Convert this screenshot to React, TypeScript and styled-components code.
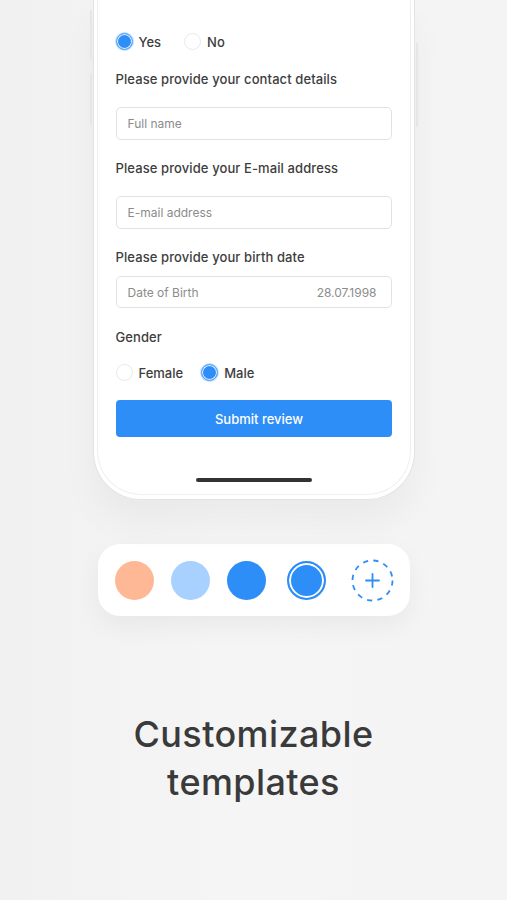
import styled, { createGlobalStyle } from "styled-components";

const GlobalStyle = createGlobalStyle`
  * {
    box-sizing: border-box;
  }
  body {
    margin: 0;
    background: #f4f4f4;
    font-family: Inter, "Noto Sans", sans-serif;
    -webkit-font-smoothing: antialiased;
  }
`;

const BLUE = "#2d8ef7";

const Page = styled.div`
  width: 507px;
  height: 900px;
  overflow: hidden;
  display: flex;
  flex-direction: column;
  align-items: center;
  background: linear-gradient(90deg, #f1f1f1 0%, #f5f5f5 45%, #f4f4f4 100%);
`;

const PhoneWrap = styled.div`
  position: relative;
  width: 322px;
`;

// hardware buttons on the phone edges
const SideButton = styled.span<{ $side: "left" | "right"; $top: number; $height: number }>`
  position: absolute;
  ${(p) => (p.$side === "left" ? "left: -3px;" : "right: -3px;")}
  top: ${(p) => p.$top}px;
  height: ${(p) => p.$height}px;
  width: 2px;
  border-radius: 1px;
  background: #e6e6e6;
`;

const Phone = styled.div`
  width: 322px;
  background: #fff;
  border: 1px solid #e3e3e3;
  border-top: 0;
  border-radius: 0 0 48px 48px;
  padding: 0 3px 4px;
  box-shadow: 0 24px 36px rgba(0, 0, 0, 0.045);
`;

const Screen = styled.div`
  display: flex;
  flex-direction: column;
  background: #fff;
  border: 1px solid #efefef;
  border-top: 0;
  border-radius: 0 0 44px 44px;
  padding: 33px 18px 12px;
`;

const RadioRow = styled.div<{ $gap: number }>`
  display: flex;
  align-items: center;
  gap: ${(p) => p.$gap}px;
  height: 17px;
`;

const Option = styled.label`
  display: flex;
  align-items: center;
  gap: 6px;
  font-size: 13px;
  font-weight: 500;
  color: #3d3d3d;
`;

const Radio = styled.span<{ $checked?: boolean }>`
  width: 17px;
  height: 17px;
  border-radius: 50%;
  flex-shrink: 0;
  ${(p) =>
    p.$checked
      ? `background: ${BLUE};
         border: 1.5px solid #5aa6fa;
         box-shadow: inset 0 0 0 1px #e8f2ff, 0 0 0 1px rgba(45, 142, 247, 0.25);`
      : `background: #fff;
         border: 1px solid #e9e9e9;`}
`;

const Label = styled.div<{ $top: number; $bottom: number }>`
  margin: ${(p) => p.$top}px 0 ${(p) => p.$bottom}px;
  line-height: 18px;
  font-size: 13px;
  font-weight: 500;
  letter-spacing: 0.1px;
  color: #3d3d3d;
`;

const Field = styled.div<{ $height: number }>`
  height: ${(p) => p.$height}px;
  display: flex;
  align-items: center;
  justify-content: space-between;
  padding: 0 14px 0 11px;
  border: 1px solid #e2e2e2;
  border-radius: 5px;
  font-size: 12px;
  color: #8c8c8c;
`;

const Submit = styled.button`
  margin-top: 19px;
  height: 37px;
  border: 0;
  border-radius: 4px;
  background: ${BLUE};
  color: #fff;
  font-family: inherit;
  font-size: 13px;
  font-weight: 500;
  padding-left: 17px;
`;

const HomeBar = styled.div`
  align-self: center;
  margin-top: 41px;
  width: 116px;
  height: 4px;
  border-radius: 2px;
  background: #333;
`;

const Palette = styled.div`
  margin-top: 44px;
  width: 312px;
  height: 72px;
  background: #fff;
  border-radius: 22px;
  box-shadow: 0 10px 26px rgba(0, 0, 0, 0.05);
  display: grid;
  grid-template-columns: 56px 56px 56px 64px 68px;
  align-items: center;
  justify-items: center;
  padding-left: 9px;
`;

const Swatch = styled.span<{ $color: string; $selected?: boolean }>`
  width: 39px;
  height: 39px;
  border-radius: 50%;
  background: ${(p) => p.$color};
  ${(p) =>
    p.$selected &&
    `border: 2px solid ${p.$color};
     box-shadow: inset 0 0 0 2px #fff;`}
`;

const Title = styled.h1`
  margin: 94px 0 0;
  text-align: center;
  font-size: 36px;
  line-height: 48px;
  font-weight: 500;
  letter-spacing: 0.4px;
  color: #3a3a3a;
`;

function AddSwatch() {
  return (
    <svg width="43" height="43" viewBox="0 0 43 43" fill="none">
      <circle
        cx="21.5"
        cy="21.5"
        r="20"
        stroke={BLUE}
        strokeWidth="1.8"
        strokeDasharray="5.2 5.3"
      />
      <path d="M21.5 15v13M15 21.5h13" stroke={BLUE} strokeWidth="1.8" strokeLinecap="round" />
    </svg>
  );
}

export default function App() {
  return (
    <>
      <GlobalStyle />
      <Page>
        <PhoneWrap>
          <SideButton $side="left" $top={10} $height={50} />
          <SideButton $side="left" $top={73} $height={52} />
          <SideButton $side="right" $top={43} $height={84} />
          <Phone>
            <Screen>
              <RadioRow $gap={23}>
                <Option>
                  <Radio $checked />
                  Yes
                </Option>
                <Option>
                  <Radio />
                  No
                </Option>
              </RadioRow>

              <Label $top={20} $bottom={19}>Please provide your contact details</Label>
              <Field $height={33}>Full name</Field>

              <Label $top={19} $bottom={19}>Please provide your E-mail address</Label>
              <Field $height={33}>E-mail address</Field>

              <Label $top={19} $bottom={10}>Please provide your birth date</Label>
              <Field $height={32}>
                <span>Date of Birth</span>
                <span>28.07.1998</span>
              </Field>

              <Label $top={20} $bottom={18}>Gender</Label>
              <RadioRow $gap={18}>
                <Option>
                  <Radio />
                  Female
                </Option>
                <Option>
                  <Radio $checked />
                  Male
                </Option>
              </RadioRow>

              <Submit>Submit review</Submit>
              <HomeBar />
            </Screen>
          </Phone>
        </PhoneWrap>

        <Palette>
          <Swatch $color="#ffb896" />
          <Swatch $color="#a9d1ff" />
          <Swatch $color={BLUE} />
          <Swatch $color={BLUE} $selected />
          <AddSwatch />
        </Palette>

        <Title>
          Customizable
          <br />
          templates
        </Title>
      </Page>
    </>
  );
}
